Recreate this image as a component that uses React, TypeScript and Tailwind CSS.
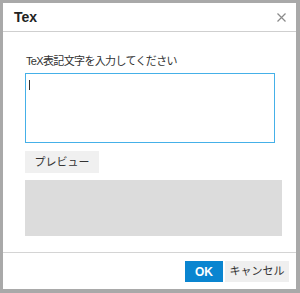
import React from "react";

export default function App() {
  return (
    <div
      className="w-[300px] h-[293px] bg-[#a9a9a9] overflow-hidden pt-[3px] pl-[3px]"
      style={{ fontFamily: '"Liberation Sans", "Noto Sans CJK JP", sans-serif' }}
    >
      <div className="w-[293px] h-[286px] bg-white flex flex-col">
        <div className="h-[29px] border-b border-[#cfcfcf] flex items-center justify-between pl-[11px] pr-[10px] shrink-0">
          <span className="text-[14px] font-bold text-[#222] leading-none">Tex</span>
          <svg width="9" height="9" viewBox="0 0 9 9" className="mt-[1px]">
            <path d="M0.5 0.5 L8.5 8.5 M8.5 0.5 L0.5 8.5" stroke="#8a8a8a" strokeWidth="1.2" />
          </svg>
        </div>
        <div className="flex-1 flex flex-col pl-[22px] pt-[22px]">
          <div className="text-[11px] leading-[14px] text-[#333] tracking-[-0.65px] pl-[1px]">
            TeX表記文字を入力してください
          </div>
          <div className="mt-[5px] w-[250px] h-[70px] border border-[#45b0e8] relative">
            <div className="absolute left-[3px] top-[6px] w-px h-[10px] bg-[#333]" />
          </div>
          <div className="mt-[8px] w-[74px] h-[22px] bg-[#f0f0f0] flex items-center justify-center text-[11px] text-[#333]">
            プレビュー
          </div>
          <div className="mt-[7px] w-[257px] h-[56px] bg-[#dcdcdc]" />
        </div>
        <div className="h-[37px] border-t border-[#d4d4d4] shrink-0 flex justify-end items-start pt-[8px] pr-[7px] gap-[2px]">
          <div className="w-[38px] h-[21px] bg-[#0a85d0] text-white font-bold text-[12px] flex items-center justify-center">
            OK
          </div>
          <div className="w-[64px] h-[21px] bg-[#efefef] text-[#333] text-[11px] flex items-center justify-center">
            キャンセル
          </div>
        </div>
      </div>
    </div>
  );
}
